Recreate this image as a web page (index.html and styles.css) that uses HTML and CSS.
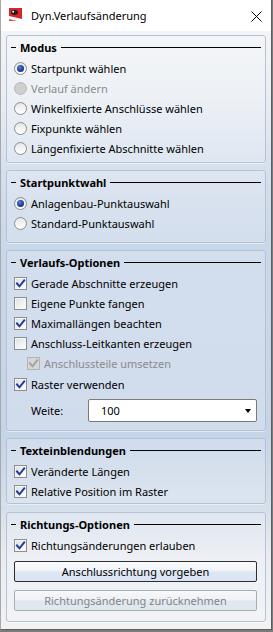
FILE: index.html
```html
<!DOCTYPE html>
<html lang="de">
<head>
<meta charset="utf-8">
<title>Dyn.Verlaufsänderung</title>
<link rel="stylesheet" href="styles.css">
</head>
<body>
<div class="window">
  <div class="titlebar">
    <svg class="app-icon" width="13" height="13" viewBox="0 0 13 13">
      <rect x="0" y="0" width="13" height="13" fill="#d8262b"/>
      <polygon points="0,8 13,11 13,13 0,13" fill="#ffffff"/>
      <polygon points="0,11 0,13 8,13" fill="#e5474b"/>
      <ellipse cx="5.5" cy="4.5" rx="3.4" ry="2.4" fill="#1d1d1d"/>
      <circle cx="4.2" cy="3.8" r="1" fill="#ffffff"/>
    </svg>
    <span class="title">Dyn.Verlaufsänderung</span>
    <svg class="close" width="11" height="11" viewBox="0 0 11 11">
      <path d="M0.5 0.5 L10.5 10.5 M10.5 0.5 L0.5 10.5" stroke="#000" stroke-width="1" fill="none"/>
    </svg>
  </div>

  <div class="content">
    <section class="group group-modus">
      <div class="group-head"><span class="dash"></span><span class="label">Modus</span><span class="rule"></span></div>
      <div class="opt"><span class="radio checked"></span><span>Startpunkt wählen</span></div>
      <div class="opt disabled"><span class="radio"></span><span>Verlauf ändern</span></div>
      <div class="opt"><span class="radio"></span><span>Winkelfixierte Anschlüsse wählen</span></div>
      <div class="opt"><span class="radio"></span><span>Fixpunkte wählen</span></div>
      <div class="opt"><span class="radio"></span><span>Längenfixierte Abschnitte wählen</span></div>
    </section>

    <section class="group group-start">
      <div class="group-head"><span class="dash"></span><span class="label">Startpunktwahl</span><span class="rule"></span></div>
      <div class="opt"><span class="radio checked"></span><span>Anlagenbau-Punktauswahl</span></div>
      <div class="opt"><span class="radio"></span><span>Standard-Punktauswahl</span></div>
    </section>

    <section class="group group-verlauf">
      <div class="group-head"><span class="dash"></span><span class="label">Verlaufs-Optionen</span><span class="rule"></span></div>
      <div class="opt"><span class="check on"><svg viewBox="0 0 11 11"><path d="M2 5.5 L4.5 8.3 L9.2 2.3"/></svg></span><span>Gerade Abschnitte erzeugen</span></div>
      <div class="opt"><span class="check"></span><span>Eigene Punkte fangen</span></div>
      <div class="opt"><span class="check on"><svg viewBox="0 0 11 11"><path d="M2 5.5 L4.5 8.3 L9.2 2.3"/></svg></span><span>Maximallängen beachten</span></div>
      <div class="opt"><span class="check"></span><span>Anschluss-Leitkanten erzeugen</span></div>
      <div class="opt indent disabled"><span class="check on"><svg viewBox="0 0 11 11"><path d="M2 5.5 L4.5 8.3 L9.2 2.3"/></svg></span><span>Anschlussteile umsetzen</span></div>
      <div class="opt raster"><span class="check on"><svg viewBox="0 0 11 11"><path d="M2 5.5 L4.5 8.3 L9.2 2.3"/></svg></span><span>Raster verwenden</span></div>
      <div class="field">
        <span class="field-label">Weite:</span>
        <div class="combo"><span>100</span><span class="arrow"></span></div>
      </div>
    </section>

    <section class="group group-text">
      <div class="group-head"><span class="dash"></span><span class="label">Texteinblendungen</span><span class="rule"></span></div>
      <div class="opt"><span class="check on"><svg viewBox="0 0 11 11"><path d="M2 5.5 L4.5 8.3 L9.2 2.3"/></svg></span><span>Veränderte Längen</span></div>
      <div class="opt"><span class="check on"><svg viewBox="0 0 11 11"><path d="M2 5.5 L4.5 8.3 L9.2 2.3"/></svg></span><span>Relative Position im Raster</span></div>
    </section>

    <section class="group group-richtung">
      <div class="group-head"><span class="dash"></span><span class="label">Richtungs-Optionen</span><span class="rule"></span></div>
      <div class="opt"><span class="check on"><svg viewBox="0 0 11 11"><path d="M2 5.5 L4.5 8.3 L9.2 2.3"/></svg></span><span>Richtungsänderungen erlauben</span></div>
      <button class="btn" type="button">Anschlussrichtung vorgeben</button>
      <button class="btn" type="button" disabled>Richtungsänderung zurücknehmen</button>
    </section>
  </div>
</div>
</body>
</html>
```

FILE: styles.css
```css
html, body {
  margin: 0;
  padding: 0;
  height: 100%;
}

body {
  background: #7b7b7b;
  font-family: "Noto Sans", "Open Sans", sans-serif;
  font-size: 11px;
  color: #000;
}

.window {
  width: 272px;
  height: 630px;
  box-sizing: border-box;
  border-left: 1px solid #a9a9a9;
  border-right: 1px solid #5e5e5e;
  border-bottom: 1px solid #5e5e5e;
  display: flex;
  flex-direction: column;
  background: #fff;
}

.titlebar {
  height: 31px;
  flex: none;
  display: flex;
  align-items: center;
  padding-left: 8px;
  background: #fff;
}

.app-icon {
  flex: none;
  margin-top: -3px;
}

.title {
  margin-left: 9px;
  font-size: 11px;
  flex: 1;
}

.close {
  flex: none;
  margin-right: 9px;
  margin-top: 1px;
}

.content {
  flex: 1;
  display: flex;
  flex-direction: column;
  gap: 7px;
  padding: 4px 5px 0 5px;
  background: linear-gradient(180deg,
    #f2f4f7 0%,
    #e9eef4 11%,
    #d6e0ed 23%,
    #c9d7ea 36%,
    #c6d4e8 68%,
    #d6e0ec 80%,
    #e9edf3 88%,
    #f0f2f4 100%);
}

.group {
  border: 1px solid #b5c2d3;
  border-radius: 3px;
  background: rgba(255, 255, 255, 0.18);
  box-shadow: 0 1px 0 rgba(255, 255, 255, 0.5);
  padding-bottom: 4px;
}

.group-head {
  height: 22px;
  display: flex;
  align-items: center;
  padding: 0 4px;
}

.dash {
  width: 5px;
  height: 1px;
  background: #000;
  flex: none;
}

.label {
  font-weight: bold;
  margin-left: 4px;
  margin-right: 4px;
  white-space: nowrap;
}

.rule {
  flex: 1;
  height: 1px;
  background: #000;
}

.opt {
  height: 20px;
  display: flex;
  align-items: center;
  gap: 4px;
  padding-left: 7px;
  white-space: nowrap;
}

.opt.indent {
  padding-left: 20px;
}

.opt.disabled {
  color: #8b8b8b;
}

.radio {
  width: 13px;
  height: 13px;
  box-sizing: border-box;
  border-radius: 50%;
  border: 1px solid #8c8e90;
  background: linear-gradient(180deg, #e4e5e6 0%, #f6f6f6 60%, #ffffff 100%);
  display: flex;
  align-items: center;
  justify-content: center;
  flex: none;
}

.radio.checked::after {
  content: "";
  width: 7px;
  height: 7px;
  border-radius: 50%;
  background: radial-gradient(circle at 40% 35%, #5c7fd1 0%, #1f3d98 55%, #142a72 100%);
}

.opt.disabled .radio {
  background: #cfcfcf;
  border-color: #b9b9b9;
}

.check {
  width: 13px;
  height: 13px;
  box-sizing: border-box;
  border: 1px solid #8c8e90;
  background: linear-gradient(135deg, #dcdcdc 0%, #f2f2f2 55%, #ffffff 100%);
  box-shadow: inset 0 0 0 1px #f7f7f7;
  flex: none;
  display: flex;
  align-items: center;
  justify-content: center;
}

.check svg {
  width: 11px;
  height: 11px;
  display: block;
}

.check path {
  fill: none;
  stroke: #1f3d99;
  stroke-width: 2;
  stroke-linecap: square;
}

.opt.disabled .check {
  background: #d6d6d6;
  border-color: #b3b3b3;
  box-shadow: none;
}

.opt.disabled .check path {
  stroke: #a3a3a3;
}

.opt.raster {
  margin-top: 1px;
}

.field {
  display: flex;
  align-items: center;
  padding-left: 24px;
  margin-top: 5px;
  margin-bottom: 3px;
}

.field-label {
  width: 57px;
  flex: none;
}

.combo {
  flex: 1;
  height: 23px;
  box-sizing: border-box;
  margin-right: 8px;
  border: 1px solid #7a7a7a;
  border-radius: 2px;
  background: #fff;
  display: flex;
  align-items: center;
  justify-content: space-between;
  padding: 0 5px 0 12px;
}

.arrow {
  width: 0;
  height: 0;
  border-left: 3.5px solid transparent;
  border-right: 3.5px solid transparent;
  border-top: 4px solid #000;
}

.group-modus {
  padding-bottom: 4px;
}

.group-start {
  padding-bottom: 9px;
}

.group-verlauf {
  padding-bottom: 5px;
}

.group-text {
  padding-bottom: 2px;
}

.group-richtung {
  margin-top: 1px;
  padding-bottom: 10px;
}

.btn {
  display: block;
  width: calc(100% - 15px);
  margin-left: 7px;
  height: 21px;
  box-sizing: border-box;
  border: 1px solid #2e2e2e;
  border-radius: 2px;
  font-family: inherit;
  font-size: 11px;
  color: #000;
  padding: 0;
  background: linear-gradient(180deg, #fafbfd 0%, #eef2f8 48%, #dde7f3 52%, #d9e4f2 100%);
}

.btn + .btn {
  margin-top: 8px;
}

.opt + .btn {
  margin-top: 6px;
}

.btn:disabled {
  border-color: #a9adb2;
  color: #848484;
  background: linear-gradient(180deg, #f6f8fa 0%, #eef1f5 48%, #e2e8f0 52%, #e1e7ef 100%);
}
```
